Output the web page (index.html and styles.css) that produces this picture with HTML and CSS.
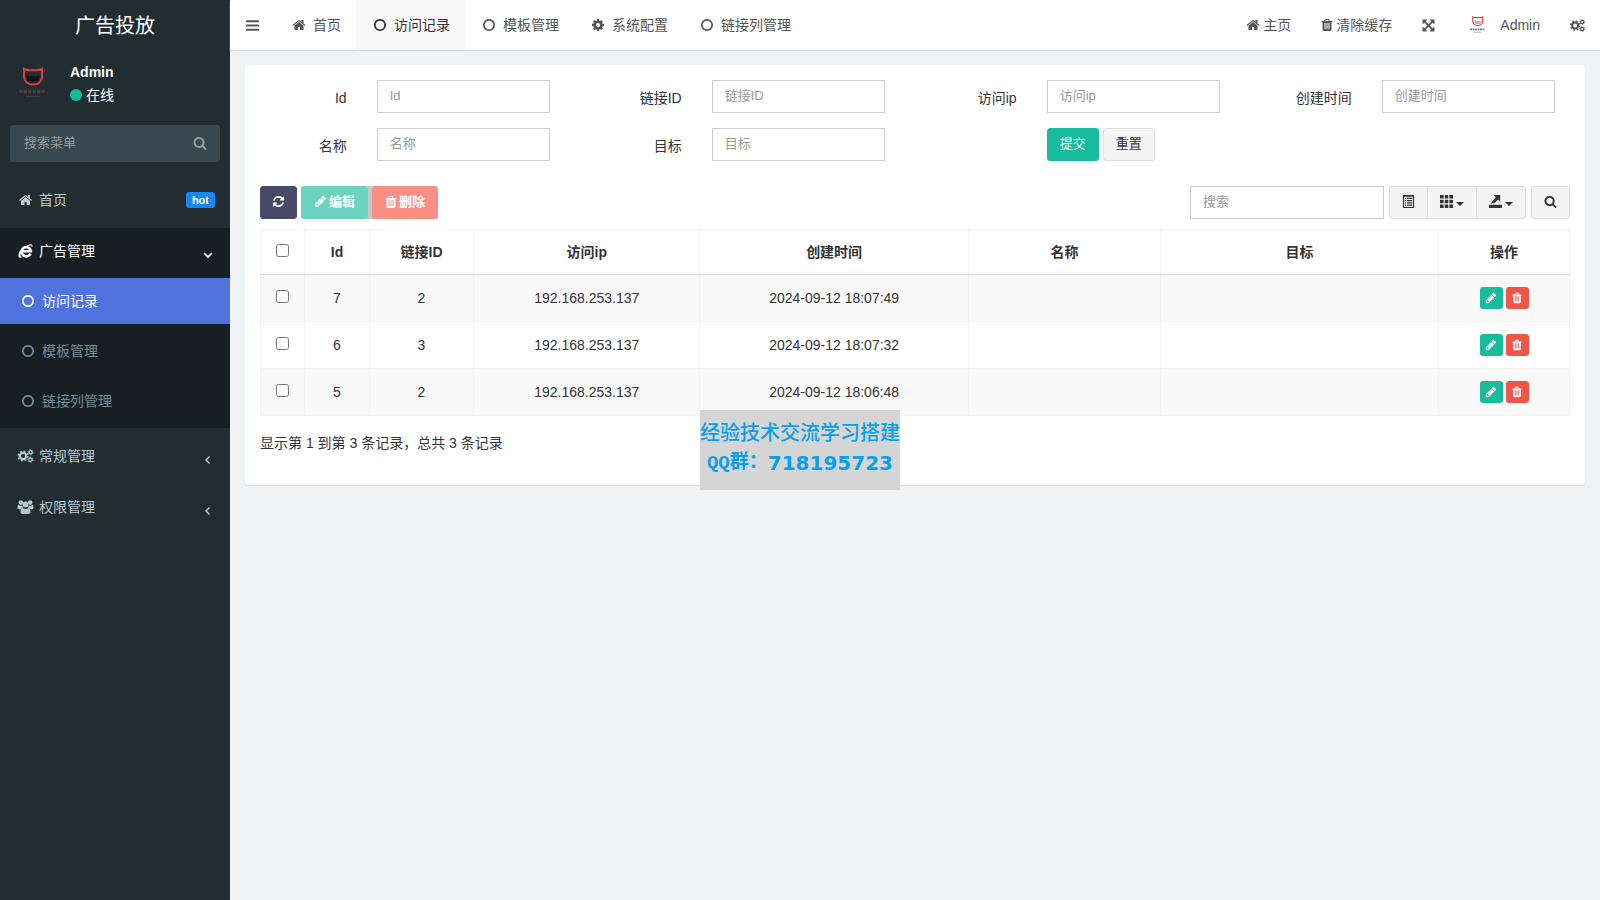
FILE: index.html
```html
<!DOCTYPE html>
<html lang="zh-CN">
<head>
<meta charset="utf-8">
<title>广告投放</title>
<link rel="stylesheet" href="styles.css">
</head>
<body>
<svg class="sprite" aria-hidden="true">
  <symbol id="home" viewBox="0 0 1792 1792"><path d="M1472 992v480q0 26-19 45t-45 19h-384v-384h-256v384h-384q-26 0-45-19t-19-45v-480q0-1 .5-3t.5-3l575-474 575 474q1 2 1 6zm223-69l-62 74q-8 9-21 11h-3q-13 0-21-7l-692-577-692 577q-12 8-24 7-13-2-21-11l-62-74q-8-10-7-23.500t11-21.500l719-599q32-26 76-26t76 26l244 204v-195q0-14 9-23t23-9h192q14 0 23 9t9 23v408l219 182q10 8 11 21.500t-7 23.500z"/></symbol>
  <symbol id="search" viewBox="0 0 1792 1792"><path d="M1216 832q0-185-131.500-316.500t-316.500-131.500-316.500 131.500-131.500 316.500 131.500 316.500 316.500 131.500 316.500-131.500 131.500-316.500zm512 832q0 52-38 90t-90 38q-54 0-90-38l-343-342q-179 124-399 124-143 0-273.500-55.500t-225-150-150-225-55.500-273.500 55.500-273.500 150-225 225-150 273.500-55.500 273.500 55.500 225 150 150 225 55.500 273.500q0 220-124 399l343 343q37 37 37 90z"/></symbol>
  <symbol id="ring" viewBox="0 0 1792 1792"><path d="M896 352q-148 0-273 73t-198 198-73 273 73 273 198 198 273 73 273-73 198-198 73-273-73-273-198-198-273-73zm768 544q0 209-103 385.500t-279.500 279.500-385.500 103-385.500-103-279.500-279.500-103-385.500 103-385.500 279.500-279.500 385.500-103 385.500 103 279.500 279.500 103 385.500z"/></symbol>
  <symbol id="cog" viewBox="0 0 1792 1792"><path d="M1152 896q0-106-75-181t-181-75-181 75-75 181 75 181 181 75 181-75 75-181zm512-109v222q0 12-8 23t-20 13l-185 28q-19 54-39 91 35 50 107 138 10 12 10 25t-9 23q-27 37-99 108t-94 71q-12 0-26-9l-138-108q-44 23-91 38-16 136-29 186-7 28-36 28h-222q-14 0-24.500-8.500t-11.500-21.500l-28-184q-49-16-90-37l-141 107q-10 9-25 9-14 0-25-11-126-114-165-168-7-10-7-23 0-12 8-23 15-21 51-66.500t54-70.500q-27-50-41-99l-183-27q-13-2-21-12.500t-8-23.500v-222q0-12 8-23t19-13l186-28q14-46 39-92-40-57-107-138-10-12-10-24 0-10 9-23 26-36 98.500-107.500t94.500-71.500q13 0 26 10l138 107q44-23 91-38 16-136 29-186 7-28 36-28h222q14 0 24.500 8.500t11.500 21.500l28 184q49 16 90 37l142-107q9-9 24-9 13 0 25 10 129 119 165 170 7 8 7 22 0 12-8 23-15 21-51 66.500t-54 70.500q26 50 41 98l183 28q13 2 21 12.500t8 23.500z"/></symbol>
  <symbol id="cogs" viewBox="0 0 16 14"><g fill="none" stroke="currentColor"><circle cx="5.500" cy="7" r="3.200" stroke-width="2.200"/><circle cx="5.500" cy="7" r="4.800" stroke-width="1.500" stroke-dasharray="1.900 1.870"/><circle cx="13" cy="3.300" r="1.700" stroke-width="1.300"/><circle cx="13" cy="3.300" r="2.600" stroke-width=".9" stroke-dasharray="1.360 1.360"/><circle cx="13" cy="10.700" r="1.700" stroke-width="1.300"/><circle cx="13" cy="10.700" r="2.600" stroke-width=".9" stroke-dasharray="1.360 1.360"/></g></symbol>
  <symbol id="bars" viewBox="0 0 14 14"><rect x="1" y="2" width="12" height="2" rx=".5"/><rect x="1" y="6" width="12" height="2" rx=".5"/><rect x="1" y="10" width="12" height="2" rx=".5"/></symbol>
  <symbol id="pencil" viewBox="0 0 1792 1792"><path d="M491 1536l91-91-235-235-91 91v107h128v128h107zm523-928q0-22-22-22-10 0-17 7l-542 542q-7 7-7 17 0 22 22 22 10 0 17-7l542-542q7-7 7-17zm-54-192l416 416-832 832h-416v-416zm683 96q0 53-37 90l-166 166-416-416 166-165q36-38 90-38 53 0 91 38l235 234q37 39 37 91z"/></symbol>
  <symbol id="trash" viewBox="192 0 1408 1792"><path d="M704 1376v-704q0-14-9-23t-23-9h-64q-14 0-23 9t-9 23v704q0 14 9 23t23 9h64q14 0 23-9t9-23zm256 0v-704q0-14-9-23t-23-9h-64q-14 0-23 9t-9 23v704q0 14 9 23t23 9h64q14 0 23-9t9-23zm256 0v-704q0-14-9-23t-23-9h-64q-14 0-23 9t-9 23v704q0 14 9 23t23 9h64q14 0 23-9t9-23zm-544-992h448l-48-117q-7-9-17-11h-317q-10 2-17 11zm928 32v64q0 14-9 23t-23 9h-96v948q0 83-47 143.500t-113 60.500h-832q-66 0-113-58.500t-47-141.500v-952h-96q-14 0-23-9t-9-23v-64q0-14 9-23t23-9h309l70-167q15-37 54-63t79-26h320q40 0 79 26t54 63l70 167h309q14 0 23 9t9 23z"/></symbol>
  <symbol id="refresh" viewBox="0 0 1792 1792"><path d="M1639 1056q0 5-1 7-64 268-268 434.500t-478 166.500q-146 0-282.500-55t-243.500-157l-129 129q-19 19-45 19t-45-19-19-45v-448q0-26 19-45t45-19h448q26 0 45 19t19 45-19 45l-137 137q71 66 161 102t187 36q134 0 250-65t186-179q11-17 53-117 8-23 30-23h192q13 0 22.500 9.500t9.500 22.500zm25-800v448q0 26-19 45t-45 19h-448q-26 0-45-19t-19-45 19-45l138-138q-148-137-349-137-134 0-250 65t-186 179q-11 17-53 117-8 23-30 23h-199q-13 0-22.500-9.500t-9.500-22.500v-7q65-268 270-434.500t480-166.500q146 0 284 55.500t245 156.500l130-129q19-19 45-19t45 19 19 45z"/></symbol>
  <symbol id="expand" viewBox="64 64 1664 1664"><path d="M1411 541l-355 355 355 355 144-144q29-31 70-14 39 17 39 59v448q0 26-19 45t-45 19h-448q-42 0-59-40-17-39 14-69l144-144-355-355-355 355 144 144q31 30 14 69-17 40-59 40h-448q-26 0-45-19t-19-45v-448q0-42 40-59 39-17 69 14l144 144 355-355-355-355-144 144q-19 19-45 19-12 0-24-5-40-17-40-59v-448q0-26 19-45t45-19h448q42 0 59 40 17 39-14 69l-144 144 355 355 355-355-144-144q-31-30-14-69 17-40 59-40h448q26 0 45 19t19 45v448q0 42-39 59-13 5-25 5-26 0-45-19z"/></symbol>
  <symbol id="globe-e" viewBox="0 0 14 14"><path fill="none" stroke="currentColor" stroke-width="2.600" d="M12 9.600A4.600 4.600 0 1 1 12.300 6.800M4 7.300H13.600"/><path d="M8.500 1.600C11 .1 13.300-.2 13.800 1c.4.800.1 2-.5 3 .1-1.300 0-2.300-1-2.500-1-.2-2.300.1-3.800.6zM4 3.500C1.500 6 .1 9.100 0 11.500c-.1 2.400 1.600 2.900 5.600 1C3.500 12.900 1.900 12.700 2 11c.1-2 1-5 3-7z"/></symbol>
  <symbol id="users" viewBox="0 0 16 14"><circle cx="3.300" cy="2.600" r="2.300"/><circle cx="12.700" cy="2.600" r="2.300"/><circle cx="8" cy="4.400" r="2.900"/><path d="M1.400 5c1.200 1 2.600 1 3.500.6.100 1 .4 1.600.9 2.200C4.400 7.800 3.500 8.500 3 9.200H1.200C.3 9.200 0 8.500 0 7.700 0 6.300.4 4.300 1.400 5zM14.600 5c-1.200 1-2.600 1-3.500.6-.1 1-.4 1.600-.9 2.200 1.400 0 2.300.7 2.800 1.400h1.800c.9 0 1.200-.7 1.200-1.500 0-1.400-.4-3.400-1.400-2.700zM5.300 8c1.700 1.200 3.700 1.200 5.400 0 2 0 2.300 2.600 2.300 4 0 1.300-.9 2-2 2H5c-1.100 0-2-.7-2-2 0-1.400.3-4 2.300-4z"/></symbol>
  <symbol id="angle-left" viewBox="0 0 14 14"><path fill="none" stroke="currentColor" stroke-width="1.500" d="M8.500 3.500 5 7l3.500 3.500"/></symbol>
  <symbol id="angle-down" viewBox="0 0 14 14"><path fill="none" stroke="currentColor" stroke-width="1.800" d="M3.200 5.200 7 9l3.800-3.800"/></symbol>
  <symbol id="list" viewBox="0 0 14 14"><path fill-rule="evenodd" d="M1 0h12v14H1zM2.200 2v10.800h9.600V2z"/><path d="M3 3h1.300v1.300H3zM5.200 3H11v1.300H5.200zM3 5.400h1.300v1.300H3zM5.200 5.400H11v1.300H5.200zM3 7.800h1.300v1.300H3zM5.200 7.800H11v1.300H5.200zM3 10.200h1.300v1.300H3zM5.200 10.200H11v1.300H5.200z"/></symbol>
  <symbol id="grid" viewBox="0 0 13 13"><path d="M0 0h3.600v3.600H0zM4.700 0h3.600v3.600H4.700zM9.400 0H13v3.600H9.400zM0 4.700h3.600v3.600H0zM4.700 4.700h3.600v3.600H4.700zM9.400 4.700H13v3.600H9.400zM0 9.400h3.600V13H0zM4.700 9.400h3.600V13H4.700zM9.400 9.400H13V13H9.400z"/></symbol>
  <symbol id="export" viewBox="0 0 13 13"><path d="M0 9.800h13V13H0zM4.500 0h6.700v6.700L9 4.500 5.500 8.300H1.800L6.800 2.300z"/></symbol>
  <symbol id="avatar" viewBox="0 0 45 45"><path class="avatar-face" d="M16.500 13q2 2 6.500 1 4.500 1 6.500-1v4c-1.500 4-11.500 4-13 0z"/><path fill="none" stroke="#e03a42" stroke-width="2" d="M14 7q3.500 1.800 9 1 5.500.8 9-1v8c0 4.500-4 7.500-9 7.500s-9-3-9-7.500z"/><g class="avatar-text"><path stroke-width="3.500" stroke-dasharray="3.500 1" d="M9 29.500h27"/><path stroke-width="1" d="M15 34.500h15"/></g></symbol>
</svg>

<div class="app">
  <aside class="sidebar">
    <a class="brand" href="#">广告投放</a>
    <div class="profile">
      <svg class="profile-avatar"><use href="#avatar"/></svg>
      <div>
        <p class="profile-name">Admin</p>
        <a class="profile-state" href="#"><span class="dot"></span>在线</a>
      </div>
    </div>
    <form class="menu-search">
      <input type="text" placeholder="搜索菜单" aria-label="搜索菜单">
      <button type="button" aria-label="搜索"><svg class="icon"><use href="#search"/></svg></button>
    </form>
    <ul class="menu">
      <li><a class="menu-link" href="#"><svg class="icon fixed"><use href="#home"/></svg>首页<span class="badge">hot</span></a></li>
      <li class="open">
        <a class="menu-link" href="#"><svg class="icon fixed"><use href="#globe-e"/></svg>广告管理<svg class="icon arrow"><use href="#angle-down"/></svg></a>
        <ul class="submenu">
          <li><a class="menu-link active" href="#"><svg class="icon fixed"><use href="#ring"/></svg>访问记录</a></li>
          <li><a class="menu-link" href="#"><svg class="icon fixed"><use href="#ring"/></svg>模板管理</a></li>
          <li><a class="menu-link" href="#"><svg class="icon fixed"><use href="#ring"/></svg>链接列管理</a></li>
        </ul>
      </li>
      <li><a class="menu-link" href="#"><svg class="icon fixed"><use href="#cogs"/></svg>常规管理<svg class="icon arrow"><use href="#angle-left"/></svg></a></li>
      <li><a class="menu-link" href="#"><svg class="icon fixed"><use href="#users"/></svg>权限管理<svg class="icon arrow"><use href="#angle-left"/></svg></a></li>
    </ul>
  </aside>

  <div class="main">
    <header class="topbar">
      <nav class="tabs">
        <a class="tab" href="#" aria-label="菜单"><svg class="icon wide"><use href="#bars"/></svg></a>
        <a class="tab" href="#"><svg class="icon fixed"><use href="#home"/></svg>首页</a>
        <a class="tab active" href="#"><svg class="icon fixed"><use href="#ring"/></svg>访问记录</a>
        <a class="tab" href="#"><svg class="icon fixed"><use href="#ring"/></svg>模板管理</a>
        <a class="tab" href="#"><svg class="icon fixed"><use href="#cog"/></svg>系统配置</a>
        <a class="tab" href="#"><svg class="icon fixed"><use href="#ring"/></svg>链接列管理</a>
      </nav>
      <nav class="tabs">
        <a class="tab tight" href="#"><svg class="icon"><use href="#home"/></svg>主页</a>
        <a class="tab tight" href="#"><svg class="icon narrow"><use href="#trash"/></svg>清除缓存</a>
        <a class="tab" href="#" aria-label="全屏"><svg class="icon small"><use href="#expand"/></svg></a>
        <a class="tab user" href="#"><svg class="user-avatar"><use href="#avatar"/></svg>Admin</a>
        <a class="tab" href="#" aria-label="设置"><svg class="icon wide"><use href="#cogs"/></svg></a>
      </nav>
    </header>

    <main class="content">
      <section class="panel">
        <form class="filters">
          <div class="field"><label for="f-id">Id</label><input class="control" id="f-id" type="text" placeholder="Id"></div>
          <div class="field"><label for="f-link">链接ID</label><input class="control" id="f-link" type="text" placeholder="链接ID"></div>
          <div class="field"><label for="f-ip">访问ip</label><input class="control" id="f-ip" type="text" placeholder="访问ip"></div>
          <div class="field"><label for="f-time">创建时间</label><input class="control" id="f-time" type="text" placeholder="创建时间"></div>
          <div class="field"><label for="f-name">名称</label><input class="control" id="f-name" type="text" placeholder="名称"></div>
          <div class="field"><label for="f-target">目标</label><input class="control" id="f-target" type="text" placeholder="目标"></div>
          <div class="field actions"><div class="buttons"><button class="btn success" type="button">提交</button><button class="btn" type="button">重置</button></div></div>
        </form>

        <div class="toolbar">
          <div class="buttons">
            <button class="btn dark" type="button" aria-label="刷新"><svg class="icon small"><use href="#refresh"/></svg></button>
            <div class="edit-group">
              <button class="btn edit" type="button"><svg class="icon small"><use href="#pencil"/></svg>编辑</button>
              <button class="btn delete" type="button"><svg class="icon narrow"><use href="#trash"/></svg>删除</button>
            </div>
          </div>
          <div class="tools">
            <input class="control" type="text" placeholder="搜索" aria-label="搜索">
            <div class="group">
              <button class="btn" type="button" aria-label="切换视图"><svg class="icon small"><use href="#list"/></svg></button>
              <button class="btn" type="button" aria-label="列"><svg class="icon small"><use href="#grid"/></svg><span class="caret"></span></button>
              <button class="btn" type="button" aria-label="导出"><svg class="icon small"><use href="#export"/></svg><span class="caret"></span></button>
            </div>
            <button class="btn" type="button" aria-label="普通搜索"><svg class="icon small"><use href="#search"/></svg></button>
          </div>
        </div>

        <table class="records">
          <colgroup><col class="c-check"><col class="c-id"><col class="c-link"><col class="c-ip"><col class="c-time"><col class="c-name"><col class="c-target"><col class="c-ops"></colgroup>
          <thead>
            <tr><th><input type="checkbox" aria-label="全选"></th><th>Id</th><th>链接ID</th><th>访问ip</th><th>创建时间</th><th>名称</th><th>目标</th><th>操作</th></tr>
          </thead>
          <tbody>
            <tr><td><input type="checkbox" aria-label="选择 7"></td><td>7</td><td>2</td><td>192.168.253.137</td><td>2024-09-12 18:07:49</td><td></td><td></td><td><div class="row-ops"><button class="mini success" type="button" aria-label="编辑"><svg><use href="#pencil"/></svg></button><button class="mini danger" type="button" aria-label="删除"><svg><use href="#trash"/></svg></button></div></td></tr>
            <tr><td><input type="checkbox" aria-label="选择 6"></td><td>6</td><td>3</td><td>192.168.253.137</td><td>2024-09-12 18:07:32</td><td></td><td></td><td><div class="row-ops"><button class="mini success" type="button" aria-label="编辑"><svg><use href="#pencil"/></svg></button><button class="mini danger" type="button" aria-label="删除"><svg><use href="#trash"/></svg></button></div></td></tr>
            <tr><td><input type="checkbox" aria-label="选择 5"></td><td>5</td><td>2</td><td>192.168.253.137</td><td>2024-09-12 18:06:48</td><td></td><td></td><td><div class="row-ops"><button class="mini success" type="button" aria-label="编辑"><svg><use href="#pencil"/></svg></button><button class="mini danger" type="button" aria-label="删除"><svg><use href="#trash"/></svg></button></div></td></tr>
          </tbody>
        </table>
        <p class="summary">显示第 1 到第 3 条记录，总共 3 条记录</p>
      </section>
    </main>
  </div>
</div>

<div class="notice">
  <p class="notice-title">经验技术交流学习搭建</p>
  <p class="notice-group"><span class="notice-label">QQ群：</span><span class="notice-number">718195723</span></p>
</div>
</body>
</html>
```
FILE: styles.css
```css
* { box-sizing: border-box; }

body {
  margin: 0;
  background: #f0f3f6;
  color: #333;
  font: 14px/20px "Liberation Sans", "Noto Sans CJK SC", sans-serif;
}

p, ul { margin: 0; padding: 0; list-style: none; }
a { color: inherit; text-decoration: none; }
input, button { font: inherit; }
svg { fill: currentColor; flex: none; }

.sprite { position: absolute; width: 0; height: 0; }
.icon { width: 14px; height: 14px; }
.icon.fixed { width: 18px; margin-right: 4px; }
.icon.narrow { width: 12px; }
.icon.wide { width: 15px; height: 15px; }
.icon.small { width: 13px; height: 13px; }

.app { display: flex; min-height: 100vh; }

/* Sidebar */
.sidebar { flex: none; width: 230px; background: #222d32; color: #b8c7ce; }
.brand { display: block; height: 50px; line-height: 52px; font-size: 20px; text-align: center; color: #fff; }
.profile { display: flex; gap: 15px; height: 65px; padding: 12px 10px 0; color: #fff; }
.profile-avatar { --face: #11161a; --caption: #453d42; width: 45px; height: 45px; }
.profile-name { font-weight: bold; }
.profile-state { display: flex; align-items: center; gap: 4px; height: 26px; }
.dot { width: 12px; height: 12px; border-radius: 50%; background: #18bc9c; }
.avatar-face { fill: var(--face); }
.avatar-text { fill: none; stroke: var(--caption); }

.menu-search { display: flex; margin: 10px 10px 15px; height: 37px; border-radius: 3px; background: #374850; }
.menu-search input { flex: 1; min-width: 0; padding: 0 14px 2px; border: 0; background: none; color: #fff; font-size: 13px; }
.menu-search input::placeholder { color: #999; opacity: 1; }
.menu-search button { display: flex; align-items: center; padding: 0 13px 2px; border: 0; background: none; color: #999; }

.menu { display: grid; gap: 5px; }
.menu-link { display: flex; align-items: center; height: 46px; padding: 0 15px 0 17px; }
.menu > li > .menu-link > .fixed { width: 17px; margin-right: 5px; }
.open { background: #181f23; }
.open > .menu-link { color: #fff; }
.arrow { margin: 8px 0 0 auto; }
.submenu { display: grid; gap: 4px; padding: 4px 0; color: #708c98; }
.submenu .menu-link { padding-left: 19px; }
.submenu .fixed, .tabs .fixed { margin-right: 5px; }
.submenu .active { background: #4e73df; color: #fff; }
.badge { margin-left: auto; padding: 0 6px; border-radius: 3px; background: #1688f1; color: #fff; font-size: 11px; line-height: 16px; font-weight: bold; }

/* Top bar */
.main { flex: 1; min-width: 0; }
.topbar { display: flex; justify-content: space-between; height: 50px; background: #fff; box-shadow: 0 1px 1px #d2d8e0; color: #555; }
.tabs { display: flex; }
.tab { display: flex; align-items: center; padding: 0 15px; }
.tab.active { background: #f9f9f9; color: #333; }
.tab.tight { gap: 3px; }
.tab.user { gap: 10px; }
.user-avatar { --face: #bbb; --caption: #777; width: 25px; height: 25px; }

/* Panel */
.content { padding: 15px; }
.panel { padding: 15px; background: #fff; border-radius: 3px; box-shadow: 0 1px 1px #dadde0; }
.filters { display: grid; grid-template-columns: repeat(4, 1fr); row-gap: 15px; margin: 0 -15px; }
.field { display: grid; grid-template-columns: 1fr 2fr; padding: 0 15px; }
.field label { padding: 8px 15px 0 0; text-align: right; }
.field .control { width: auto; min-width: 0; margin: 0 15px; }
.actions .buttons { grid-column: 2; margin-left: 15px; }

.control { height: 33px; padding: 0 12px 2px; border: 1px solid #ccc; border-radius: 0; background: #fff; color: #555; font-size: 13px; }
.control::placeholder { color: #999; opacity: 1; }

.buttons { display: flex; gap: 4px; }
.btn { display: flex; align-items: center; gap: 3px; height: 33px; padding: 0 12px 2px; border: 1px solid #ddd; border-radius: 3px; background: #f4f4f4; color: #333; font-size: 13px; }
.btn.success { border-color: #18bc9c; background: #18bc9c; color: #fff; }
.btn.dark { padding: 0 11px 2px; border-color: #474a66; background: #474a66; color: #fff; }
.edit-group { display: flex; gap: 4px; background: #c5c9c9; border-radius: 3px; }
.edit-group .btn { gap: 2px; }
.btn.edit { border-color: #6bd3c0; background: #6bd3c0; color: #fff; font-weight: bold; }
.btn.delete { border-color: #f98f85; background: #f98f85; color: #fff; font-weight: bold; }

.toolbar { display: flex; justify-content: space-between; padding: 25px 0 10px; }
.tools { display: flex; gap: 5px; }
.tools .control { width: 194px; }
.group { display: flex; }
.group .btn:not(:first-child) { margin-left: -1px; border-top-left-radius: 0; border-bottom-left-radius: 0; }
.group .btn:not(:last-child) { border-top-right-radius: 0; border-bottom-right-radius: 0; }
.caret { margin-top: 4px; border: 4px solid transparent; border-top-color: currentColor; border-bottom: 0; }

/* Records */
.records { width: 100%; table-layout: fixed; border-collapse: collapse; text-align: center; }
.records th, .records td { height: 47px; padding: 0 8px; border: 1px solid #f3f3f3; }
.records th { height: 45px; border-bottom: 1px solid #d5d8d8; }
.records tbody tr:nth-child(odd) { background: #f9f9f9; }
.records input { display: block; width: 13px; height: 13px; margin: 0 auto 3px; }
.c-check { width: 44px; }
.c-id { width: 65px; }
.c-link { width: 104px; }
.c-ip { width: 17.300%; }
.c-time { width: 20.500%; }
.c-name { width: 14.700%; }
.c-ops { width: 131px; }
.row-ops { display: flex; justify-content: center; gap: 3px; }
.mini { display: flex; align-items: center; justify-content: center; width: 23px; height: 22px; padding: 0; border: 0; border-radius: 3px; color: #fff; }
.mini svg { width: 12px; height: 12px; }
.mini.success { background: #18bc9c; }
.mini.danger { background: #ef5548; }
.summary { padding: 17px 0; }

/* Floating notice */
.notice { position: absolute; top: 410px; left: 700px; width: 200px; height: 80px; padding-top: 8px; background: #d5d5d5; color: #0a9fe8; text-align: center; white-space: nowrap; }
.notice-title { font-family: KaiTi, "Noto Sans CJK SC", sans-serif; font-size: 20px; line-height: 28px; font-weight: 500; }
.notice-group { display: flex; justify-content: center; align-items: center; line-height: 34px; }
.notice-label { font-family: "Liberation Mono", "Noto Sans CJK SC", monospace; font-size: 19px; font-weight: bold; }
.notice-number { font-family: "DejaVu Sans", sans-serif; font-size: 20px; font-weight: bold; }
```
